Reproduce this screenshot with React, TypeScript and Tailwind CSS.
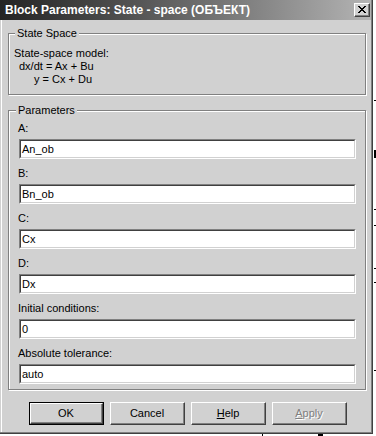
import React from 'react';

const font = "font-['Liberation_Sans',Arial,sans-serif]";

/**
 * Classic raised push button
 */
const Button: React.FC<{ isDefault?: boolean; disabled?: boolean; children: React.ReactNode }> = ({
  isDefault,
  disabled,
  children,
}) => {
  const face = (
    <div className="flex-1 flex border-t border-l border-t-white border-l-white border-b border-r border-b-[#404040] border-r-[#404040]">
      <div className="flex-1 flex items-center justify-center border-b border-r border-b-[#808080] border-r-[#808080]">
        <span
          className={
            disabled
              ? 'text-[11px] leading-[13px] text-[#808080] [text-shadow:1px_1px_0_#ffffff]'
              : 'text-[11px] leading-[13px] text-black'
          }
        >
          {children}
        </span>
      </div>
    </div>
  );

  if (isDefault) {
    return <div className="w-[75px] h-[23px] flex border border-black">{face}</div>;
  }
  return <div className="w-[75px] h-[23px] flex">{face}</div>;
};

/**
 * Sunken edit field
 */
const Field: React.FC<{ label: string; value: string }> = ({ label, value }) => (
  <div className="flex flex-col">
    <div className="text-[11px] leading-[13px] text-black">{label}</div>
    <div className="mt-[4px] ml-[1px] w-[337px] h-[20px] flex border border-t-[#808080] border-l-[#808080] border-b-white border-r-white">
      <div className="flex-1 flex items-center border border-t-[#404040] border-l-[#404040] border-b-[#d1d1d1] border-r-[#d1d1d1] bg-white">
        <span className="pl-[1px] text-[11px] leading-[13px] text-black">{value}</span>
      </div>
    </div>
  </div>
);

export default function App() {
  const fields = [
    { label: 'A:', value: 'An_ob' },
    { label: 'B:', value: 'Bn_ob' },
    { label: 'C:', value: 'Cx' },
    { label: 'D:', value: 'Dx' },
    { label: 'Initial conditions:', value: '0' },
    { label: 'Absolute tolerance:', value: 'auto' },
  ];

  return (
    <div className={`relative w-[376px] h-[436px] bg-white overflow-hidden ${font}`}>
      {/* bits of the window behind */}
      <div className="absolute left-[374px] top-[100px] w-[2px] h-[1px] bg-black" />
      <div className="absolute left-[374px] top-[150px] w-[2px] h-[8px] bg-black" />
      <div className="absolute left-[374px] top-[209px] w-[2px] h-[1px] bg-black" />
      <div className="absolute left-[374px] top-[225px] w-[2px] h-[1px] bg-black" />
      <div className="absolute left-[374px] top-[268px] w-[2px] h-[1px] bg-black" />
      <div className="absolute left-[374px] top-[282px] w-[2px] h-[1px] bg-black" />
      <div className="absolute left-[374px] top-[370px] w-[2px] h-[1px] bg-black" />
      <div className="absolute left-[262px] top-[434px] w-[1px] h-[2px] bg-black" />
      <div className="absolute left-[318px] top-[434px] w-[5px] h-[2px] bg-black" />

      {/* dialog window */}
      <div className="w-[373px] h-[434px] flex flex-col border-r border-b border-[#404040]">
        <div className="flex-1 flex flex-col border-r border-b border-[#808080] bg-[#d1d1d1]">
          {/* title bar */}
          <div className="h-[20px] flex items-center bg-linear-to-r from-[#242424] to-[#b4b4b4]">
            <span className="flex-1 pl-[5px] text-[12px] leading-[14px] font-bold text-white whitespace-nowrap">
              Block Parameters: State - space (ОБЪЕКТ)
            </span>
            <div className="mr-[1px] w-[16px] h-[14px] flex border-t border-l border-t-white border-l-white border-b border-r border-b-[#404040] border-r-[#404040]">
              <div className="flex-1 flex items-center justify-center bg-[#d1d1d1] border-b border-r border-b-[#808080] border-r-[#808080]">
                <svg width="8" height="7" viewBox="0 0 8 7" shapeRendering="crispEdges">
                  <path
                    d="M0 0h2v1h-2zM6 0h2v1h-2zM1 1h2v1h-2zM5 1h2v1h-2zM2 2h4v1h-4zM3 3h2v1h-2zM2 4h4v1h-4zM1 5h2v1h-2zM5 5h2v1h-2zM0 6h2v1h-2zM6 6h2v1h-2z"
                    fill="#000"
                  />
                </svg>
              </div>
            </div>
          </div>

          {/* body */}
          <div className="flex-1 flex flex-col ml-[1px] border-l border-white">
            <fieldset className="mt-[7px] ml-[6px] w-[358px] pl-[5px] pt-[7px] pb-[8px] border border-[#808080] shadow-[inset_1px_1px_0_#ffffff,1px_1px_0_#ffffff]">
              <legend className="ml-[1px] px-[2px] bg-[#d1d1d1] text-[11px] leading-[13px] text-black">
                State Space
              </legend>
              <div className="text-[11px] leading-[13px] text-black">State-space model:</div>
              <div className="pl-[5px] text-[11px] leading-[13px] text-black">dx/dt = Ax + Bu</div>
              <div className="pl-[20px] text-[11px] leading-[13px] text-black">y = Cx + Du</div>
            </fieldset>

            <fieldset className="mt-[9px] ml-[6px] w-[358px] pl-[9px] pt-[5px] pb-[5px] border border-[#808080] shadow-[inset_1px_1px_0_#ffffff,1px_1px_0_#ffffff]">
              <legend className="-ml-[2px] px-[2px] bg-[#d1d1d1] text-[11px] leading-[13px] text-black">
                Parameters
              </legend>
              <div className="flex flex-col gap-[8px]">
                {fields.map((f) => (
                  <Field key={f.label} label={f.label} value={f.value} />
                ))}
              </div>
            </fieldset>

            <div className="mt-[12px] pl-[27px] flex gap-[6px]">
              <Button isDefault>OK</Button>
              <Button>Cancel</Button>
              <Button>
                <span className="underline">H</span>elp
              </Button>
              <Button disabled>
                <span className="underline">A</span>pply
              </Button>
            </div>
          </div>
        </div>
      </div>
    </div>
  );
}
